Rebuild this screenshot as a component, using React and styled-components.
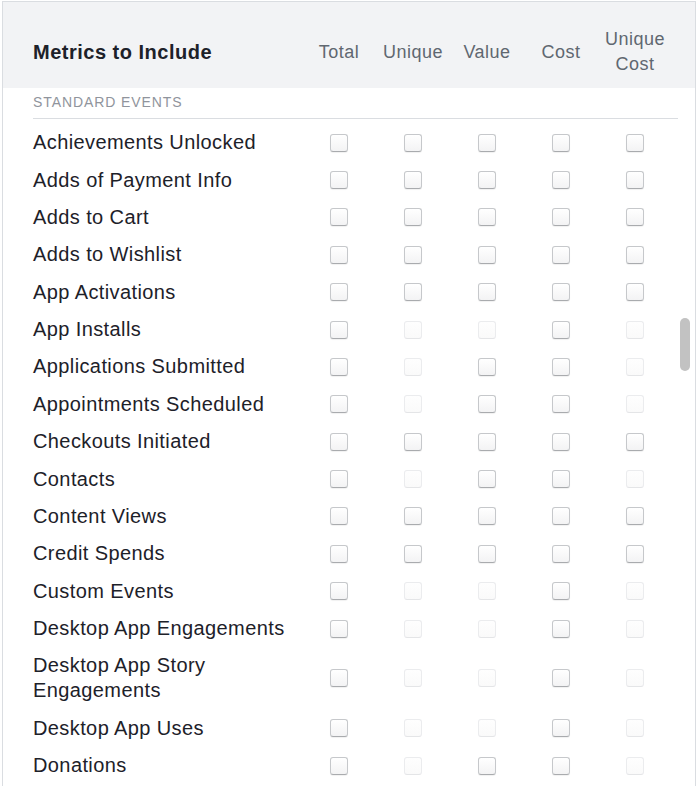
import styled, { createGlobalStyle } from "styled-components";

const GlobalStyle = createGlobalStyle`
  html, body {
    margin: 0;
    padding: 0;
    background: #ffffff;
    overflow: hidden;
  }
  body {
    font-family: "Liberation Sans", Arial, Helvetica, sans-serif;
    -webkit-font-smoothing: antialiased;
  }
`;

const COLUMNS = ["Total", "Unique", "Value", "Cost", "Unique Cost"];

// "x" marks a metric that can't be picked for that event
const EVENTS = [
  ["Achievements Unlocked", "....."],
  ["Adds of Payment Info", "....."],
  ["Adds to Cart", "....."],
  ["Adds to Wishlist", "....."],
  ["App Activations", "....."],
  ["App Installs", ".xx.x"],
  ["Applications Submitted", ".x..x"],
  ["Appointments Scheduled", ".x..x"],
  ["Checkouts Initiated", "....."],
  ["Contacts", ".x..x"],
  ["Content Views", "....."],
  ["Credit Spends", "....."],
  ["Custom Events", ".xx.x"],
  ["Desktop App Engagements", ".xx.x"],
  ["Desktop App Story Engagements", ".xx.x"],
  ["Desktop App Uses", ".xx.x"],
  ["Donations", ".x..x"],
];

const Panel = styled.div`
  position: relative;
  margin: 1px 0 0 2px;
  width: 692px;
  min-height: 820px;
  border: 1px solid #dadde1;
  background: #ffffff;
  overflow: hidden;
`;

const Header = styled.div`
  display: grid;
  grid-template-columns: 269px repeat(5, 74px);
  align-items: center;
  height: 86px;
  box-sizing: border-box;
  padding: 25px 17px 11px 30px;
  background: #f2f3f5;
`;

const Title = styled.div`
  font-size: 20px;
  line-height: 25px;
  font-weight: 700;
  letter-spacing: 0.5px;
  color: #1d2129;
`;

const ColumnLabel = styled.div`
  font-size: 18px;
  line-height: 25px;
  letter-spacing: 0.5px;
  color: #606770;
  text-align: center;
`;

const Body = styled.div`
  padding: 0 17px 0 30px;
`;

const SectionLabel = styled.div`
  padding: 5px 0 7px;
  font-size: 14px;
  line-height: 18px;
  letter-spacing: 0.9px;
  text-transform: uppercase;
  color: #90949c;
  border-bottom: 1px solid #dadde1;
`;

const List = styled.div`
  padding-top: 5px;
`;

const Row = styled.div`
  display: grid;
  grid-template-columns: 269px repeat(5, 74px);
  align-items: center;
  padding: 6.2px 0;
`;

const EventName = styled.div`
  font-size: 20px;
  line-height: 25px;
  letter-spacing: 0.4px;
  color: #1d2129;
  padding-right: 10px;
`;

const Cell = styled.div`
  display: flex;
  justify-content: center;
`;

const Check = styled.input.attrs({ type: "checkbox" })`
  appearance: none;
  -webkit-appearance: none;
  margin: 0;
  width: 18px;
  height: 18px;
  box-sizing: border-box;
  border-radius: 3px;
  border: 1px solid ${(p) => (p.disabled ? "#ebecee" : "#c6c8cb")};
  border-bottom-color: ${(p) => (p.disabled ? "#e4e5e7" : "#a9abae")};
  background: ${(p) =>
    p.disabled
      ? "linear-gradient(#fefefe, #fafafa)"
      : "linear-gradient(#ffffff, #f3f3f4)"};
  box-shadow: ${(p) =>
    p.disabled ? "none" : "0 1px 1px rgba(0, 0, 0, 0.06)"};
`;

const ScrollThumb = styled.div`
  position: absolute;
  top: 316px;
  right: 5px;
  width: 10px;
  height: 53px;
  border-radius: 5px;
  background: #c2c2c2;
`;

export default function App() {
  return (
    <>
      <GlobalStyle />
      <Panel>
        <Header>
          <Title>Metrics to Include</Title>
          {COLUMNS.map((c) => (
            <ColumnLabel key={c}>
              {c === "Unique Cost" ? (
                <>
                  Unique
                  <br />
                  Cost
                </>
              ) : (
                c
              )}
            </ColumnLabel>
          ))}
        </Header>
        <Body>
          <SectionLabel>Standard Events</SectionLabel>
          <List>
            {EVENTS.map(([name, mask]) => (
              <Row key={name}>
                <EventName>{name}</EventName>
                {COLUMNS.map((c, i) => (
                  <Cell key={c}>
                    <Check disabled={mask[i] === "x"} aria-label={`${name} ${c}`} />
                  </Cell>
                ))}
              </Row>
            ))}
          </List>
        </Body>
        <ScrollThumb />
      </Panel>
    </>
  );
}
